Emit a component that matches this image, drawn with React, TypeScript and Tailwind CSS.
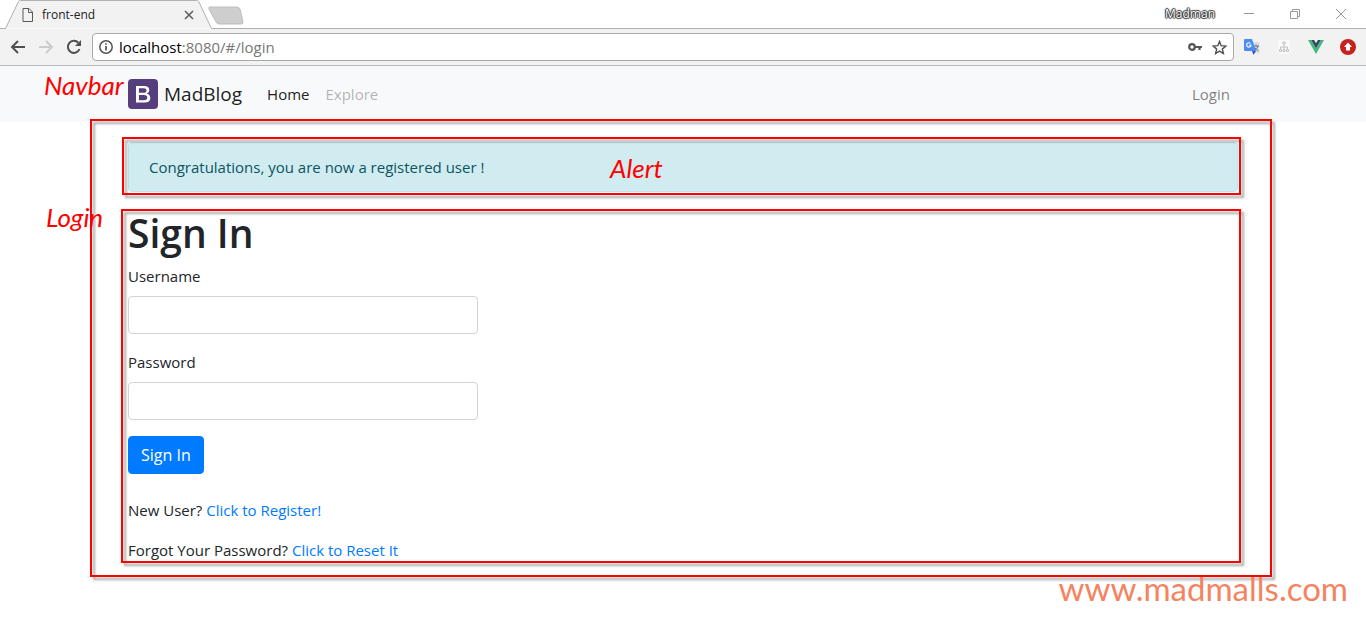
import React, { useState } from 'react';
import clsx from 'clsx';

const Frame: React.FC<{ className: string }> = ({ className }) => (
  <div
    className={clsx(
      'absolute border-2 border-[#f00] pointer-events-none drop-shadow-[3px_3px_1px_rgba(0,0,0,0.35)]',
      className
    )}
  />
);

const Note: React.FC<{ className: string; children: React.ReactNode }> = ({ className, children }) => (
  <span className={clsx("absolute font-['Lato',sans-serif] italic text-[26px] leading-7 text-[#f00]", className)}>
    {children}
  </span>
);

const TabStrip = () => (
  <div className="relative h-[29px] bg-white flex justify-between">
    <div className="relative flex items-start">
      <svg className="absolute left-0 top-0" width="250" height="29" fill="none">
        <path d="M0 28.5H5.5L18.5 1.5Q19 .5 20.5 .5H196.5Q198 .5 198.7 1.5L211.5 28.5H250" fill="#f2f2f2" stroke="#b0b0b0" />
        <path d="M210 7H237Q239 7 240 9L243 22Q243 24 241 24H219Q217 24 216 22L209 9Q208 7 210 7Z" fill="#cecece" stroke="#bdbdbd" />
      </svg>
      <div className="relative flex items-center h-[29px] w-[206px] pl-[22px] pr-2">
        <svg width="12" height="14" viewBox="0 0 12 14" fill="none" stroke="#5a5a5a">
          <path d="M1 .5H7L10.500 4V13.500H1Z M6.500 .5V4.500H10.500" />
        </svg>
        <span className="ml-2 flex-1 text-xs text-[#222]">front-end</span>
        <button aria-label="Close tab" className="p-1">
          <svg width="10" height="10" viewBox="0 0 10 10" stroke="#5a5a5a" strokeWidth="1.500">
            <path d="M1 1L9 9M9 1L1 9" />
          </svg>
        </button>
      </div>
    </div>
    <div className="absolute left-[250px] right-0 bottom-0 h-px bg-[#b0b0b0]" />
    <div className="flex items-center pr-[19px] h-7 text-[#999]">
      <span className="mr-7 text-xs font-medium text-white [text-shadow:1px_0_1px_#222,-1px_0_1px_#222,0_1px_1px_#222,0_-1px_1px_#222]">
        Madman
      </span>
      <button aria-label="Minimize" className="mr-[34px]">
        <svg width="12" height="12" stroke="currentColor"><path d="M1 5.500H11" /></svg>
      </button>
      <button aria-label="Restore" className="mr-[34px]">
        <svg width="12" height="12" fill="none" stroke="currentColor">
          <path d="M1.500 3.500H8.500V10.500H1.500Z M3.500 3.500V1.500H10.500V8.500H8.500" />
        </svg>
      </button>
      <button aria-label="Close">
        <svg width="12" height="12" stroke="currentColor"><path d="M1 1L11 11M11 1L1 11" /></svg>
      </button>
    </div>
  </div>
);

const Toolbar = () => {
  const [url, setUrl] = useState('localhost:8080/#/login');
  const [host, ...rest] = url.split(':');

  return (
    <div className="flex items-center h-[37px] bg-[#f2f2f2] border-b border-[#b8b8b8] pl-[10px] pr-[10px]">
      <button aria-label="Back" className="mr-3">
        <svg width="16" height="16" viewBox="0 0 16 16" fill="none" stroke="#505050" strokeWidth="2">
          <path d="M15 8H2M8 2L2 8L8 14" />
        </svg>
      </button>
      <button aria-label="Forward" className="mr-3">
        <svg width="16" height="16" viewBox="0 0 16 16" fill="none" stroke="#ccc" strokeWidth="2">
          <path d="M1 8H14M8 2L14 8L8 14" />
        </svg>
      </button>
      <button aria-label="Reload" className="mr-[10px]">
        <svg width="16" height="16" viewBox="0 0 16 16" fill="none" stroke="#505050" strokeWidth="2">
          <path d="M13.500 10A6 6 0 1 1 12.300 3.800" />
          <path d="M15 1V7H9Z" fill="#505050" stroke="none" />
        </svg>
      </button>
      <div className="flex flex-1 items-center h-7 bg-white border border-[#a9a9a9] rounded-sm pl-[6px] pr-[6px]">
        <svg width="14" height="14" viewBox="0 0 14 14" fill="none" stroke="#555" strokeWidth="1.500">
          <circle cx="7" cy="7" r="6.200" />
          <path d="M7 6V10.500M7 3.200V4.800" strokeWidth="1.700" />
        </svg>
        <label className="relative flex-1 ml-[6px] text-[15px] leading-[22px]">
          <input
            aria-label="Address"
            value={url}
            onChange={(e) => setUrl(e.target.value)}
            className="block w-full text-transparent caret-black outline-none"
          />
          <span className="absolute inset-0 pointer-events-none text-[#777]">
            <span className="text-black">{host}</span>
            {rest.length > 0 && `:${rest.join(':')}`}
          </span>
        </label>
        <button aria-label="Saved passwords" className="mr-[10px]">
          <svg width="14" height="10" viewBox="0 0 14 10" fill="none" stroke="#555">
            <circle cx="4" cy="5" r="2.800" strokeWidth="2.200" />
            <path d="M7 5H14M11.500 5V8" strokeWidth="2.200" />
          </svg>
        </button>
        <button aria-label="Bookmark">
          <svg width="15" height="15" viewBox="0 0 15 15" fill="none" stroke="#505050" strokeWidth="1.400">
            <path d="M7.500 1.500L9.200 5.700L13.800 6.100L10.300 9.100L11.400 13.500L7.500 11.100L3.600 13.500L4.700 9.100L1.200 6.100L5.800 5.700Z" />
          </svg>
        </button>
      </div>
      <div className="flex items-center gap-4 pl-[10px]">
        <button aria-label="Translate">
          <svg width="16" height="16" viewBox="0 0 16 16">
            <path d="M6 3H15.500V14H10Z" fill="#ddd" />
            <path d="M9.500 7H15M12 5.500V7M14 7Q13.500 10 10 12M10.800 8.500Q12 11 14.500 12" fill="none" stroke="#5c7a84" />
            <path d="M0 1Q0 0 1 0H8L12 12H1Q0 12 0 11Z" fill="#4c8bf5" />
            <path d="M8 12H12L9.500 16Z" fill="#3058c8" />
            <path d="M6.500 4.500A2.200 2.200 0 1 0 7 6.300H5" fill="none" stroke="#fff" strokeWidth="1.100" />
          </svg>
        </button>
        <button aria-label="Site map">
          <svg width="16" height="16" viewBox="0 0 16 16" fill="none" stroke="#c2c2c2">
            <rect x="2" y="1" width="12" height="14" rx="2" fill="#fafafa" stroke="none" />
            <circle cx="8" cy="4" r="1.300" />
            <path d="M8 5.500V10M4.500 10V8H11.500V10M3.500 10.500H5.500V12.500H3.500ZM7 10.500H9V12.500H7ZM10.500 10.500H12.500V12.500H10.500Z" />
          </svg>
        </button>
        <button aria-label="Vue devtools">
          <svg width="16" height="14" viewBox="0 0 16 14">
            <path d="M0 0H3.200L8 8.300L12.800 0H16L8 14Z" fill="#41b883" />
            <path d="M3.200 0H6.100L8 3.300L9.900 0H12.800L8 8.300Z" fill="#35495e" />
          </svg>
        </button>
        <button aria-label="Update">
          <svg width="16" height="16" viewBox="0 0 16 16">
            <circle cx="8" cy="8" r="8" fill="#c5221f" />
            <path d="M8 3.500L12 8H10V11.500H6V8H4Z" fill="#fff" />
          </svg>
        </button>
      </div>
    </div>
  );
};

const Navbar = () => (
  <nav className="bg-[#f8f9fa]">
    <div className="relative max-w-[1140px] mx-auto px-[15px] h-14 flex items-center">
      <Note className="-left-[69px] top-[5px]">Navbar</Note>
      <a href="#/" className="flex items-center gap-[6px] mr-[25px] text-[19px] text-black/90">
        <svg width="30" height="30" viewBox="0 0 30 30">
          <rect width="30" height="30" rx="4" fill="#563d7c" />
          <path
            d="M8 7H16Q21.300 7 21.300 11.200Q21.300 13.800 18.900 14.800Q22.300 15.700 22.300 19Q22.300 23.500 16.500 23.500H8Z M10.900 9.200V13.800H15.500Q18.500 13.800 18.500 11.500Q18.500 9.200 15.500 9.200Z M10.900 16V21.300H16Q19.300 21.300 19.300 18.600Q19.300 16 16 16Z"
            fill="#fff"
            fillRule="evenodd"
          />
        </svg>
        MadBlog
      </a>
      <a href="#/" className="mr-4 text-black/90">Home</a>
      <a href="#/explore" className="text-black/30">Explore</a>
      <a href="#/login" className="ml-auto mr-2 text-black/50">Login</a>
    </div>
  </nav>
);

const Field: React.FC<{ id: string; label: string; type: string }> = ({ id, label, type }) => {
  const [value, setValue] = useState('');

  return (
    <div className="mb-4">
      <label htmlFor={id} className="block mb-2">{label}</label>
      <input
        id={id}
        type={type}
        value={value}
        onChange={(e) => setValue(e.target.value)}
        className="block w-full h-[38px] px-3 bg-white border border-[#ced4da] rounded outline-none"
      />
    </div>
  );
};

const Login = () => (
  <section className="relative">
    <Frame className="-left-[7px] -right-[3px] top-px -bottom-px" />
    <Note className="-left-[82px] -top-[5px]">Login</Note>
    <h1 className="mb-[6px] text-[39px] leading-[50px] font-semibold">Sign In</h1>
    <form onSubmit={(e) => e.preventDefault()} className="max-w-[350px]">
      <Field id="username" label="Username" type="text" />
      <Field id="password" label="Password" type="password" />
      <button type="submit" className="block h-[38px] px-3 rounded border border-[#007bff] bg-[#007bff] text-base text-white">
        Sign In
      </button>
    </form>
    <p className="mt-6 mb-4">
      New User? <a href="#/register" className="text-[#007bff]">Click to Register!</a>
    </p>
    <p>
      Forgot Your Password? <a href="#/reset" className="text-[#007bff]">Click to Reset It</a>
    </p>
  </section>
);

export default function App() {
  return (
    <div className="min-h-screen overflow-x-hidden bg-white font-['Open_Sans','Noto_Sans',sans-serif] text-[#212529]">
      <header>
        <TabStrip />
        <Toolbar />
      </header>
      <div className="text-[15px] leading-6">
        <Navbar />
        <main className="relative max-w-[1140px] mx-auto px-[15px] pt-5 pb-[10px]">
          <Frame className="-left-[23px] -right-[19px] -top-[3px] -bottom-[5px]" />
          <div role="alert" className="relative mb-4 px-5 py-3 rounded border border-[#bee5eb] bg-[#d1ecf1] text-[#0c5460]">
            Congratulations, you are now a registered user !
            <Frame className="-left-[7px] -right-[4px] -top-[6px] -bottom-[4px]" />
            <Note className="left-[481px] top-[11px]">Alert</Note>
          </div>
          <Login />
        </main>
      </div>
      <footer className="relative pr-[18px] text-right font-['Lato',sans-serif] text-[33px] leading-8 text-[#f4845f]">
        www.madmalls.com
      </footer>
    </div>
  );
}
